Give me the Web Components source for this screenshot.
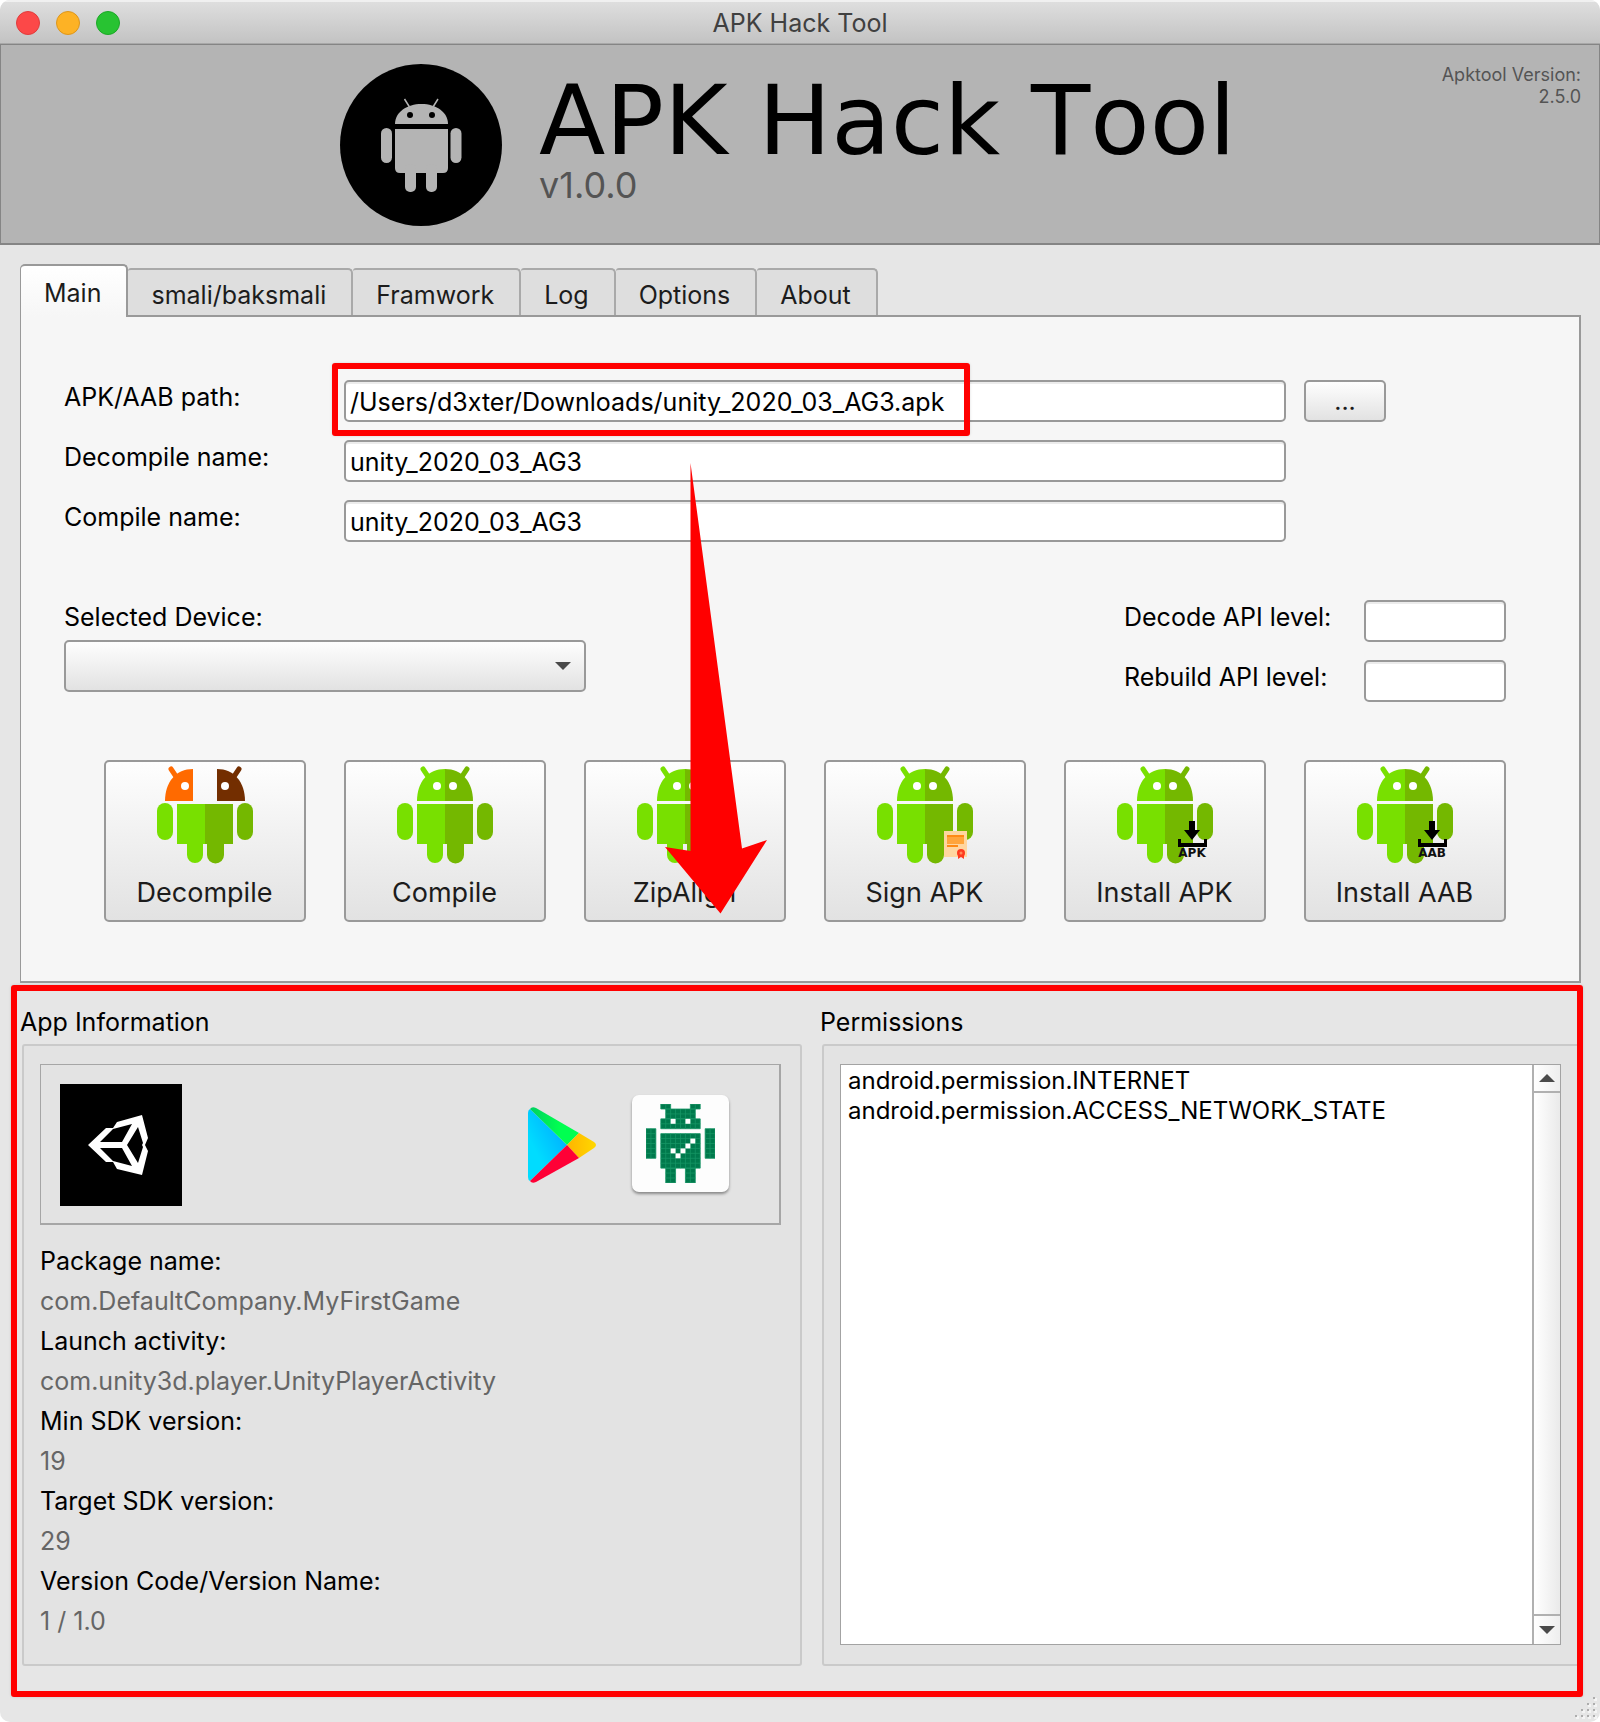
<!DOCTYPE html>
<html lang="en">
<head>
<meta charset="utf-8">
<title>APK Hack Tool</title>
<style>
  html { background: #fff; }
  body { margin: 0; font: 25px/34px Inter, "Liberation Sans", sans-serif; color: #000; }
</style>
</head>
<body>
<apk-window>
  <title-bar>APK Hack Tool</title-bar>
  <app-banner name="APK Hack Tool" version="v1.0.0" tool-version="2.5.0"></app-banner>
  <tab-bar></tab-bar>
  <main-pane></main-pane>
  <info-section></info-section>
</apk-window>

<script>
function define(name, html) {
  customElements.define(name, class extends HTMLElement {
    constructor() {
      super();
      this.attachShadow({ mode: "open" });
    }
    connectedCallback() {
      const base = "<style>*{box-sizing:border-box}button,input,select{font:inherit;margin:0}</style>";
      this.shadowRoot.innerHTML = base + (typeof html === "function" ? html(this) : html);
    }
  });
}

/* ---------- window frame ---------- */
define("apk-window", `
  <style>
    :host { display: flex; flex-direction: column; position: relative; min-height: 100vh;
            background: #e6e6e6; border-radius: 10px; overflow: hidden; box-sizing: border-box; }
    svg { position: absolute; right: 3px; bottom: 3px; }
  </style>
  <slot></slot>
  <svg width="22" height="22" viewBox="0 0 22 22" aria-hidden="true">
    <g fill="#f4f4f4"><path d="M19 1h3v3h-3zM13 7h3v3h-3zM19 7h3v3h-3zM7 13h3v3H7zM13 13h3v3h-3zM19 13h3v3h-3zM1 19h3v3H1zM7 19h3v3H7zM13 19h3v3h-3zM19 19h3v3h-3z"/></g>
    <g fill="#adadad"><path d="M18 0h2v2h-2zM12 6h2v2h-2zM18 6h2v2h-2zM6 12h2v2H6zM12 12h2v2h-2zM18 12h2v2h-2zM0 18h2v2H0zM6 18h2v2H6zM12 18h2v2h-2zM18 18h2v2h-2z"/></g>
  </svg>`);

define("title-bar", `
  <style>
    :host { display: grid; grid-template-columns: 1fr auto 1fr; align-items: center; height: 44px;
            padding: 0 16px; box-sizing: border-box; color: #404040;
            background: linear-gradient(#dedede, #c3c3c3); border-top: 2px solid #f0f0f0; border-bottom: 1px solid #a8a8a8; }
    .lights { display: flex; gap: 16px; }
    button { width: 24px; height: 24px; padding: 0; border-radius: 50%; border: 1px solid; }
    .c { background: #fc4848; border-color: #e03c3c; }
    .m { background: #fdb225; border-color: #dd961c; }
    .z { background: #28c332; border-color: #1ca827; }
  </style>
  <div class="lights">
    <button class="c" aria-label="Close"></button><button class="m" aria-label="Minimize"></button><button class="z" aria-label="Zoom"></button>
  </div>
  <slot></slot>`);

define("app-banner", el => `
  <style>
    :host { display: grid; grid-template-columns: 1fr auto 1fr; height: 201px; padding: 19px 18px 0 0;
            box-sizing: border-box; background: #b4b4b4; border: solid #858585; border-width: 1px 1px 2px; }
    .brand { grid-column: 2; display: flex; gap: 37px; padding-right: 6px; }
    .words { padding-top: 9px; }
    h1 { margin: 0; font: 400 97px/96px "DejaVu Sans", sans-serif; font-kerning: none; }
    .v { margin: 0; font-size: 36px; line-height: 32px; color: #545454; }
    .tool { margin: 0; font-size: 18px; line-height: 22px; color: #545454; text-align: right; }
  </style>
  <div class="brand">
    <svg width="162" height="162" viewBox="0 0 162 162" aria-hidden="true">
      <circle cx="81" cy="81" r="81"/>
      <g fill="#b4b4b4">
        <path d="M55 60C55 48 67 40 81.500 40S108 48 108 60z"/>
        <path d="M55 65h53v39q0 5-5 5H60q-5 0-5-5z"/>
        <rect x="41" y="64" width="11" height="35" rx="5.500"/>
        <rect x="110.500" y="64" width="11" height="35" rx="5.500"/>
        <rect x="65" y="100" width="11" height="28" rx="5"/>
        <rect x="86" y="100" width="11" height="28" rx="5"/>
      </g>
      <path d="M64.500 35l5 8M98 35l-5 8" stroke="#b4b4b4" stroke-width="1.500"/>
      <circle cx="70" cy="51" r="3"/><circle cx="92" cy="51" r="3"/>
    </svg>
    <div class="words">
      <h1>${el.getAttribute("name")}</h1>
      <p class="v">${el.getAttribute("version")}</p>
    </div>
  </div>
  <p class="tool">Apktool Version:<br>${el.getAttribute("tool-version")}</p>`);

/* ---------- tabs ---------- */
define("tab-bar", `
  <style>
    :host { display: flex; align-items: flex-end; padding: 19px 20px 0; position: relative; z-index: 1; }
    button { height: 47px; padding: 4px 25px 0 23px; color: #1c1c1c; background: #dedede;
             border: solid #a9a9a9; border-width: 2px 2px 0 0; border-radius: 3px 5px 0 0; }
    button.on { height: 53px; margin-bottom: -2px; padding-top: 2px; background: linear-gradient(#fff, #f6f6f6);
             border: solid #999; border-width: 2px 2px 0 1px; border-radius: 5px 5px 0 0; }
  </style>
  <button class="on">Main</button><button>smali/baksmali</button><button>Framwork</button><button>Log</button><button>Options</button><button>About</button>`);

/* ---------- controls ---------- */
const INPUT_CSS = `
  input { width: 100%; height: 42px; padding: 2px 4px 0; color: #000; background: #fff; border: 2px solid #999;
          border-radius: 5px; box-shadow: inset 0 2px #ececec; outline: 0; }`;

define("text-field", el => `
  <style>
    :host { display: grid; grid-template-columns: var(--label, 280px) minmax(0, 1fr); align-items: start; position: relative; flex: 1; }
    ${INPUT_CSS}
  </style>
  <label for="f">${el.getAttribute("label")}</label>
  <input id="f" type="text" value="${el.getAttribute("value") || ""}">
  <slot></slot>`);

define("mark-box", `
  <style>
    :host { position: absolute; z-index: 3; box-sizing: border-box; border: 6px solid #f00; border-radius: 3px;
            pointer-events: none; box-shadow: 0 0 3px #0002; }
  </style>`);

define("mark-arrow", `
  <style>
    :host { position: absolute; z-index: 4; pointer-events: none; display: block; width: 102px; height: 452px; }
    svg { display: block; }
  </style>
  <svg width="102" height="452" viewBox="0 0 102 452" aria-hidden="true">
    <path d="M25.500 0 77 385.500 102 377 55.500 450.500 0 384 25.500 388z" fill="#f00"/>
  </svg>`);

define("device-select", `
  <style>
    :host { display: flex; flex-direction: column; gap: 6px; width: 522px; }
    .box { position: relative; }
    select { appearance: none; display: block; width: 100%; height: 52px; border: 2px solid #999; border-radius: 5px;
             background: linear-gradient(#fefefe, #e2e2e2); }
    svg { position: absolute; right: 15px; top: 22px; pointer-events: none; }
  </style>
  <label for="d">Selected Device:</label>
  <div class="box">
    <select id="d"><option></option></select>
    <svg width="16" height="8" viewBox="0 0 16 8" aria-hidden="true"><path d="M0 0h16L8 8z" fill="#4a4a4a"/></svg>
  </div>`);

/* ---------- action buttons ---------- */
const G1 = "#78e000", G2 = "#74b800";
const leftHead = c => `<path d="M48 2C31 2 20 15 20 34h28z" fill="${c}"/><path d="M26 2l6 9" stroke="${c}" stroke-width="5" stroke-linecap="round"/><circle cx="40" cy="19" r="4" fill="#fff"/>`;
const rightHead = c => `<path d="M48 2c17 0 28 13 28 32H48z" fill="${c}"/><path d="M70 2l-6 9" stroke="${c}" stroke-width="5" stroke-linecap="round"/><circle cx="56" cy="19" r="4" fill="#fff"/>`;
const robot = split => `
  <g transform="translate(${split ? -12 : 0})">${leftHead(split ? "#ff6a00" : G1)}</g>
  <g transform="translate(${split ? 12 : 0})">${rightHead(split ? "#732e00" : G2)}</g>
  <g fill="${G1}"><rect y="36" width="16" height="37" rx="8"/><path d="M20 37h28v40h-2v11a8 8 0 0 1-16 0V77H20z"/></g>
  <g fill="${G2}"><rect x="80" y="36" width="16" height="37" rx="8"/><path d="M48 37h28v40h-9v11a8 8 0 0 1-17 0V77h-2z"/></g>`;
const install = t => `
  <path d="M72 54h6v9h5l-8 10-8-10h5zM61 72h3v4h23v-4h3v8H61z" fill="#000"/>
  <text x="75" y="90" text-anchor="middle" font-family="DejaVu Sans, sans-serif" font-weight="700" font-size="12" fill="#111">${t}</text>`;
const EXTRAS = {
  sign: `<path d="M67 64h23v26H67z" fill="#ffd6a0"/><path d="M70 70h17v7H70z" fill="#ffa53c"/><path d="M70 69h17M70 79h11" stroke="#ff8a14" stroke-width="2"/><circle cx="84" cy="86" r="4" fill="#ff3a1e"/><path d="M81 88v4l3-2 3 2v-4z" fill="#ff3a1e"/><circle cx="84" cy="86" r="1.500" fill="#ff8a5a"/>`,
  apk: install("APK"),
  aab: install("AAB")
};
define("action-button", el => `
  <style>
    :host { display: block; }
    button { display: flex; flex-direction: column; align-items: center; gap: 13px; width: 100%; height: 162px; padding: 5px 1px 0 0;
             font-size: 27px; color: #1c1c1c; border: 2px solid #999; border-radius: 5px; background: linear-gradient(#fefefe, #e2e2e2); }
  </style>
  <button>
    <svg width="96" height="96" viewBox="0 0 96 96" overflow="visible" aria-hidden="true">${robot(el.getAttribute("icon") === "split")}${EXTRAS[el.getAttribute("icon")] || ""}</svg>
    <span><slot></slot></span>
  </button>`);

define("main-pane", `
  <style>
    :host { display: flex; flex-direction: column; gap: 58px; position: relative; margin: 0 19px 0 20px; padding: 63px 73px 59px 43px;
            background: #f6f6f6; border: 2px solid #999; border-left-width: 1px; box-sizing: border-box; }
    .fields { display: flex; flex-direction: column; gap: 18px; margin-right: 120px; }
    .row { display: flex; gap: 18px; }
    .pad { padding-right: 100px; }
    .browse { width: 82px; height: 42px; padding: 0; border: 2px solid #999; border-radius: 5px; color: #1c1c1c;
              background: linear-gradient(#fefefe, #e2e2e2); }
    .mid { display: flex; justify-content: space-between; align-items: flex-start; }
    .api { display: flex; flex-direction: column; gap: 18px; width: 382px; --label: 240px; }
    .actions { display: grid; grid-template-columns: repeat(6, 1fr); gap: 38px; margin-left: 40px; }
    mark-box { left: 268px; top: -17px; width: 638px; height: 73px; }
    mark-arrow { left: 644px; top: 146px; }
  </style>
  <div class="fields">
    <div class="row">
      <text-field label="APK/AAB path:" value="/Users/d3xter/Downloads/unity_2020_03_AG3.apk"><mark-box></mark-box></text-field>
      <button class="browse" aria-label="Browse">...</button>
    </div>
    <div class="row pad"><text-field label="Decompile name:" value="unity_2020_03_AG3"></text-field></div>
    <div class="row pad"><text-field label="Compile name:" value="unity_2020_03_AG3"></text-field></div>
  </div>
  <div class="mid">
    <device-select></device-select>
    <div class="api">
      <text-field label="Decode API level:"></text-field>
      <text-field label="Rebuild API level:"></text-field>
    </div>
  </div>
  <div class="actions">
    <action-button icon="split">Decompile</action-button>
    <action-button>Compile</action-button>
    <action-button>ZipAlign</action-button>
    <action-button icon="sign">Sign APK</action-button>
    <action-button icon="apk">Install APK</action-button>
    <action-button icon="aab">Install AAB</action-button>
  </div>
  <mark-arrow></mark-arrow>`);

/* ---------- lower section ---------- */
define("group-box", el => `
  <style>
    :host { display: flex; flex-direction: column; gap: 4px; min-width: 0; }
    h2 { margin: 0; font-size: inherit; font-weight: 400; line-height: 36px; }
    .frame { flex: 1; display: flex; flex-direction: column; margin-left: 2px; padding: 18px 19px 19px 16px;
             background: #e3e3e3; border: 2px solid #cacaca; border-radius: 3px; }
  </style>
  <h2>${el.getAttribute("label")}</h2>
  <div class="frame"><slot></slot></div>`);

/* Pixel robot: [column, row, width, height] in grid cells. */
const CELLS = [[3,0,2,1],[9,0,2,1],[4,1,6,2],[3,3,8,2],[0,5,2,6],[12,5,2,6],[3,6,8,7],[4,13,2,3],[8,13,2,3]];
const HOLES = [[5,3],[8,3],[9,7],[8,8],[7,9],[6,10],[5,9]];
define("app-links", `
  <style>
    :host { display: flex; align-items: center; height: 161px; padding: 2px 50px 0 19px; box-sizing: border-box;
            border: solid #a6a6a6; border-width: 1px 2px 2px 1px; }
    svg { display: block; }
    .unity { margin-right: auto; }
    a { display: block; }
    .play { margin-right: 36px; }
    .check { width: 97px; height: 97px; margin-top: -4px; background: #fdfdfd; border-radius: 7px; box-shadow: 0 2px 3px #0006; padding: 9px 14px; }
  </style>
  <svg class="unity" width="122" height="122" viewBox="0 0 122 122" aria-hidden="true">
    <path d="M0 0h122v122H0z"/>
    <path fill="#fff" fill-rule="evenodd" d="M28 61 46 44 53 44 57 38 82 31 88 54 85 61 88 67 82 91 57 85 53 78 46 78zM40 58H62L72 40 53 45zM40 64 53 77 72 82 62 64zM67 61 78 79 83 63 82 61 83 59 78 43z"/>
  </svg>
  <a class="play" href="#" aria-label="Google Play">
    <svg width="68" height="76" viewBox="0 0 68 76">
      <defs>
        <linearGradient id="b" x1="1" y1="0" x2="0" y2="1"><stop stop-color="#00a0ff"/><stop offset=".7" stop-color="#00dcff"/></linearGradient>
        <linearGradient id="y"><stop stop-color="#ffb400"/><stop offset="1" stop-color="#ffd800"/></linearGradient>
        <linearGradient id="g"><stop stop-color="#00d060"/><stop offset=".6" stop-color="#00ff50"/></linearGradient>
      </defs>
      <path d="M2 2Q0 3 0 6v64q0 3 2 4L39 38z" fill="url(#b)"/>
      <path d="M2 2Q4-1 8 1L51 26 39 38z" fill="url(#g)"/>
      <path d="M51 26 66 35q4 3 0 6L51 51 39 38z" fill="url(#y)"/>
      <path d="M2 74q2 3 6 1L51 51 39 38z" fill="#ff0036"/>
    </svg>
  </a>
  <a class="check" href="#" aria-label="APK check">
    <svg width="69" height="79" viewBox="0 0 14 16">
      ${CELLS.map(c => `<rect x="${c[0]}" y="${c[1]}" width="${c[2]}" height="${c[3]}" fill="#00794c"/>`).join("")}
      ${CELLS.map(c => { let d = ""; for (let x = 0; x <= c[2]; x++) d += `M${c[0] + x} ${c[1]}v${c[3]}`; for (let y = 0; y <= c[3]; y++) d += `M${c[0]} ${c[1] + y}h${c[2]}`; return `<path d="${d}" stroke="#159565" stroke-width=".16"/>`; }).join("")}
      ${HOLES.map(h => `<rect x="${h[0]}" y="${h[1]}" width="1" height="1" fill="#fff"/>`).join("")}
    </svg>
  </a>`);

define("app-facts", `
  <style>
    :host { display: block; padding: 16px 0 4px; }
    dl, dd { margin: 0; }
    dl { line-height: 40px; }
    dd { color: #666; }
  </style>
  <dl>
    <dt>Package name:</dt><dd>com.DefaultCompany.MyFirstGame</dd>
    <dt>Launch activity:</dt><dd>com.unity3d.player.UnityPlayerActivity</dd>
    <dt>Min SDK version:</dt><dd>19</dd>
    <dt>Target SDK version:</dt><dd>29</dd>
    <dt>Version Code/Version Name:</dt><dd>1 / 1.0</dd>
  </dl>`);

define("permission-list", `
  <style>
    :host { flex: 1; display: flex; background: #fff; border: 1px solid #a3a3a3; }
    ul { flex: 1; margin: 0; padding: 1px 7px; list-style: none; font-size: 24px; line-height: 30px; }
    .bar { display: flex; flex-direction: column; justify-content: space-between; width: 28px;
           border-left: 2px solid #b0b0b0; background: linear-gradient(90deg, #fff, #eaeaea); }
    button { display: flex; align-items: center; justify-content: center; height: 28px; padding: 0; border: 0;
             background: linear-gradient(90deg, #fff, #eee); }
    .up { border-bottom: 2px solid #b0b0b0; }
    .down { height: 30px; border-top: 2px solid #b0b0b0; }
  </style>
  <ul><li>android.permission.INTERNET</li><li>android.permission.ACCESS_NETWORK_STATE</li></ul>
  <div class="bar">
    <button class="up" aria-label="Scroll up"><svg width="16" height="8" viewBox="0 0 16 8"><path d="M0 8h16L8 0z" fill="#4a4a4a"/></svg></button>
    <button class="down" aria-label="Scroll down"><svg width="16" height="8" viewBox="0 0 16 8"><path d="M0 0h16L8 8z" fill="#4a4a4a"/></svg></button>
  </div>`);

define("info-section", `
  <style>
    :host { display: grid; grid-template-columns: 782fr 762fr; gap: 18px; flex: 1; position: relative;
            padding: 21px 18px 56px 20px; box-sizing: border-box; }
    mark-box { top: 2px; left: 11px; right: 17px; bottom: 25px; }
  </style>
  <group-box label="App Information">
    <app-links></app-links>
    <app-facts></app-facts>
  </group-box>
  <group-box label="Permissions">
    <permission-list></permission-list>
  </group-box>
  <mark-box></mark-box>`);
</script>
</body>
</html>
